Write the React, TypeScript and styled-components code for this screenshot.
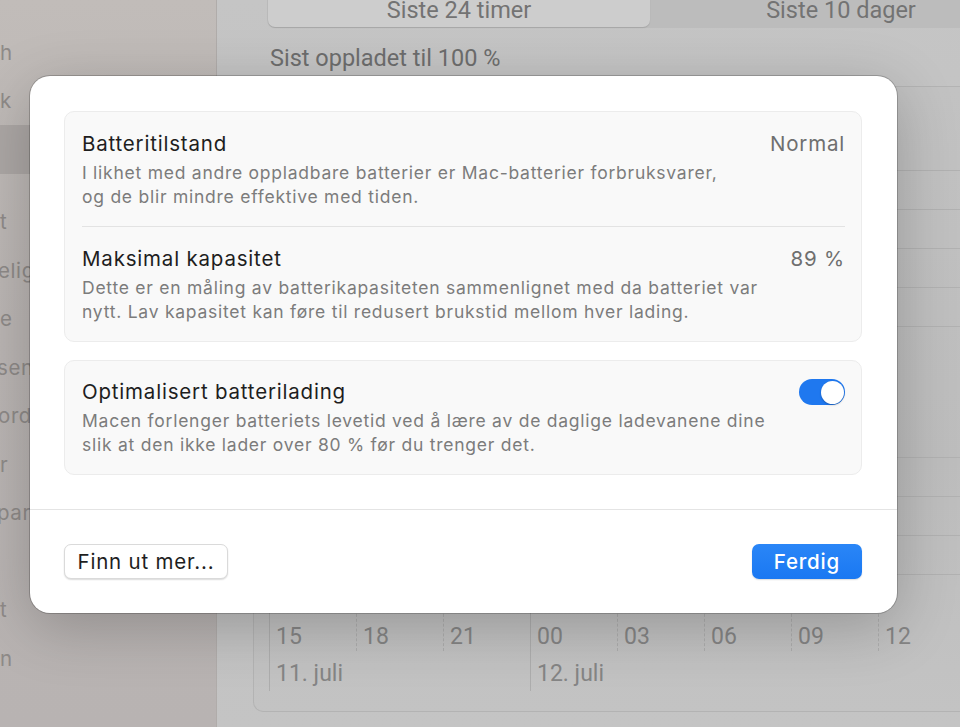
import React from "react";
import styled, { createGlobalStyle } from "styled-components";

const GlobalStyle = createGlobalStyle`
  html, body {
    margin: 0;
    padding: 0;
    overflow: hidden;
  }
  * {
    box-sizing: border-box;
  }
`;

const Screen = styled.div`
  position: relative;
  width: 960px;
  height: 727px;
  overflow: hidden;
  display: grid;
  grid-template-columns: 217px 1fr;
  font-family: Roboto, "Liberation Sans", sans-serif;
`;

// ---- dimmed window behind the sheet ----

const Sidebar = styled.div`
  background: linear-gradient(180deg, #c1bcb9 0%, #bab5b3 45%, #b8b3b2 100%);
  border-right: 1px solid #b0acaa;
  padding-top: 28px;
  display: flex;
  flex-direction: column;
`;

const SideGap = styled.div`
  height: 24px;
`;

const SideRow = styled.div<{ selected?: boolean; cut?: number }>`
  height: 48.5px;
  display: flex;
  align-items: center;
  font-family: Inter, "Noto Sans", sans-serif;
  font-size: 20.5px;
  letter-spacing: 0.6px;
  color: #8e8a88;
  background: ${(p) => (p.selected ? "#aca7a5" : "transparent")};
  white-space: nowrap;
  overflow: hidden;

  span {
    margin-left: ${(p) => -(p.cut ?? 0)}px;
  }
`;

const Main = styled.div`
  background: linear-gradient(180deg, #c5c5c5 0%, #c0c0c0 50%, #c4c4c4 100%);
  padding-left: 36px;
  display: flex;
  flex-direction: column;
  overflow: hidden;
`;

const Segmented = styled.div`
  margin: -12px 0 0 14px;
  width: 766px;
  height: 40px;
  flex-shrink: 0;
  display: flex;
  padding: 1px;
  border-radius: 8px;
  background: #bcbcbc;
`;

const Segment = styled.div<{ active?: boolean }>`
  flex: 1;
  display: flex;
  align-items: flex-end;
  justify-content: center;
  padding-bottom: 3px;
  font-size: 23.5px;
  color: #737373;
  border-radius: 7px;
  background: ${(p) => (p.active ? "#cdcdcd" : "transparent")};
  box-shadow: ${(p) => (p.active ? "0 1px 1px rgba(0,0,0,0.12)" : "none")};
`;

const LastCharged = styled.div`
  margin: 16px 0 0 17px;
  font-size: 23.5px;
  line-height: 28px;
  color: #6d6d6d;
`;

const ChartCard = styled.div`
  margin-top: 14px;
  height: 626px;
  flex-shrink: 0;
  border: 1px solid #b3b3b3;
  border-right: none;
  border-radius: 10px 0 0 10px;
  background: linear-gradient(180deg, #c2c2c2 0%, #bdbdbd 60%, #c3c3c3 100%);
  padding: 83px 0 0 15px;
  display: flex;
  flex-direction: column;
`;

const GridBlock = styled.div<{ cells: number; after: number }>`
  display: grid;
  grid-template-rows: repeat(${(p) => p.cells}, 39px);
  border-bottom: 1px solid #b1b1b1;
  margin-bottom: ${(p) => p.after}px;

  div {
    border-top: 1px solid #b1b1b1;
  }
`;

const Ticks = styled.div`
  display: grid;
  grid-template-columns: repeat(8, 87px);
  align-items: start;
`;

const Tick = styled.div<{ long?: boolean }>`
  height: ${(p) => (p.long ? 116 : 76)}px;
  border-left: 1px ${(p) => (p.long ? "solid" : "dashed")} #adadad;
  padding: 51px 0 0 6px;
  display: flex;
  flex-direction: column;
  gap: 15px;
  font-size: 23px;
  color: #858585;
  line-height: 22px;
  white-space: nowrap;
`;

// ---- the sheet ----

const Sheet = styled.div`
  position: absolute;
  left: 30px;
  top: 76px;
  width: 867px;
  height: 537px;
  background: #ffffff;
  border-radius: 20px;
  box-shadow: 0 0 0 1px rgba(0, 0, 0, 0.2), 0 14px 60px rgba(0, 0, 0, 0.22);
  display: flex;
  flex-direction: column;
  font-family: Inter, "Noto Sans", sans-serif;
`;

const SheetBody = styled.div`
  padding: 35px 35px 34px 34px;
  display: flex;
  flex-direction: column;
  gap: 18px;
`;

const Card = styled.div`
  background: #f9f9f9;
  border: 1px solid #ececec;
  border-radius: 10px;
  display: flex;
  flex-direction: column;
`;

const Row = styled.div<{ top?: number }>`
  display: flex;
  align-items: flex-start;
  justify-content: space-between;
  padding: ${(p) => p.top ?? 19}px 16px 17px 17px;
`;

const RowDivider = styled.div`
  height: 1px;
  margin: 0 16px 0 17px;
  background: #e3e3e3;
`;

const TextCol = styled.div`
  display: flex;
  flex-direction: column;
  gap: 5px;
`;

const Title = styled.div`
  font-size: 20.5px;
  letter-spacing: 0.8px;
  line-height: 24px;
  color: #1e1e1e;
`;

const Desc = styled.div`
  font-size: 17.5px;
  letter-spacing: 0.75px;
  line-height: 24px;
  color: #7c7c7c;
  white-space: nowrap;
`;

const Value = styled.div`
  font-size: 20.5px;
  letter-spacing: 0.8px;
  line-height: 24px;
  color: #6f6f6f;
`;

const Toggle = styled.div<{ on?: boolean }>`
  position: relative;
  flex-shrink: 0;
  margin-top: -1px;
  width: 46px;
  height: 26px;
  border-radius: 13px;
  background: ${(p) => (p.on ? "#1f78ef" : "#dcdcdc")};

  &::after {
    content: "";
    position: absolute;
    top: 1.5px;
    left: ${(p) => (p.on ? "21.5px" : "1.5px")};
    width: 23px;
    height: 23px;
    border-radius: 50%;
    background: #ffffff;
    box-shadow: 0 1px 2px rgba(0, 0, 0, 0.25);
  }
`;

const SheetDivider = styled.div`
  height: 1px;
  background: #e4e4e4;
`;

const Footer = styled.div`
  flex: 1;
  display: flex;
  align-items: flex-start;
  justify-content: space-between;
  padding: 34px 35px 0 34px;
`;

const Button = styled.button<{ primary?: boolean }>`
  height: 35px;
  padding: 0 ${(p) => (p.primary ? "22px" : "12.5px")};
  border-radius: 7px;
  font-family: Inter, "Noto Sans", sans-serif;
  font-size: 20.5px;
  letter-spacing: 0.8px;
  font-weight: ${(p) => (p.primary ? 500 : 400)};
  color: ${(p) => (p.primary ? "#ffffff" : "#1e1e1e")};
  background: ${(p) =>
    p.primary ? "linear-gradient(180deg, #2a86f7 0%, #1a78f2 100%)" : "#ffffff"};
  border: ${(p) => (p.primary ? "none" : "1px solid #dadada")};
  box-shadow: 0 1px 1.5px rgba(0, 0, 0, 0.14);
  cursor: pointer;
`;

const sideRows: { text: string; cut?: number; selected?: boolean }[] = [
  { text: "h" },
  { text: "k" },
  { text: "", selected: true },
];

const sideRows2: { text: string; cut?: number }[] = [
  { text: "t" },
  { text: "eligheter", cut: 2 },
  { text: "e" },
  { text: "senter", cut: 3 },
  { text: "ord", cut: 2 },
  { text: "r" },
  { text: "parer", cut: 3 },
  { text: "" },
  { text: "t" },
  { text: "n" },
];

const ticks = ["15", "18", "21", "00", "03", "06", "09", "12"];

export default function App() {
  return (
    <>
      <GlobalStyle />
      <Screen>
        <Sidebar>
          {sideRows.map((r, i) => (
            <SideRow key={i} selected={r.selected} cut={r.cut}>
              <span>{r.text}</span>
            </SideRow>
          ))}
          <SideGap />
          {sideRows2.map((r, i) => (
            <SideRow key={i} cut={r.cut}>
              <span>{r.text}</span>
            </SideRow>
          ))}
        </Sidebar>

        <Main>
          <Segmented>
            <Segment active>Siste 24 timer</Segment>
            <Segment>Siste 10 dager</Segment>
          </Segmented>
          <LastCharged>Sist oppladet til 100 %</LastCharged>
          <ChartCard>
            <GridBlock cells={4} after={130}>
              <div />
              <div />
              <div />
              <div />
            </GridBlock>
            <GridBlock cells={3} after={0}>
              <div />
              <div />
              <div />
            </GridBlock>
            <Ticks>
              {ticks.map((t, i) => (
                <Tick key={t} long={i === 0 || i === 3}>
                  <span>{t}</span>
                  {i === 0 && <span>11. juli</span>}
                  {i === 3 && <span>12. juli</span>}
                </Tick>
              ))}
            </Ticks>
          </ChartCard>
        </Main>

        <Sheet>
          <SheetBody>
            <Card>
              <Row top={20}>
                <TextCol>
                  <Title>Batteritilstand</Title>
                  <Desc>
                    I likhet med andre oppladbare batterier er Mac-batterier forbruksvarer,
                    <br />
                    og de blir mindre effektive med tiden.
                  </Desc>
                </TextCol>
                <Value>Normal</Value>
              </Row>
              <RowDivider />
              <Row top={20}>
                <TextCol>
                  <Title>Maksimal kapasitet</Title>
                  <Desc>
                    Dette er en måling av batterikapasiteten sammenlignet med da batteriet var
                    <br />
                    nytt. Lav kapasitet kan føre til redusert brukstid mellom hver lading.
                  </Desc>
                </TextCol>
                <Value>89 %</Value>
              </Row>
            </Card>

            <Card>
              <Row>
                <TextCol>
                  <Title>Optimalisert batterilading</Title>
                  <Desc>
                    Macen forlenger batteriets levetid ved å lære av de daglige ladevanene dine
                    <br />
                    slik at den ikke lader over 80 % før du trenger det.
                  </Desc>
                </TextCol>
                <Toggle on />
              </Row>
            </Card>
          </SheetBody>

          <SheetDivider />

          <Footer>
            <Button>Finn ut mer...</Button>
            <Button primary>Ferdig</Button>
          </Footer>
        </Sheet>
      </Screen>
    </>
  );
}
